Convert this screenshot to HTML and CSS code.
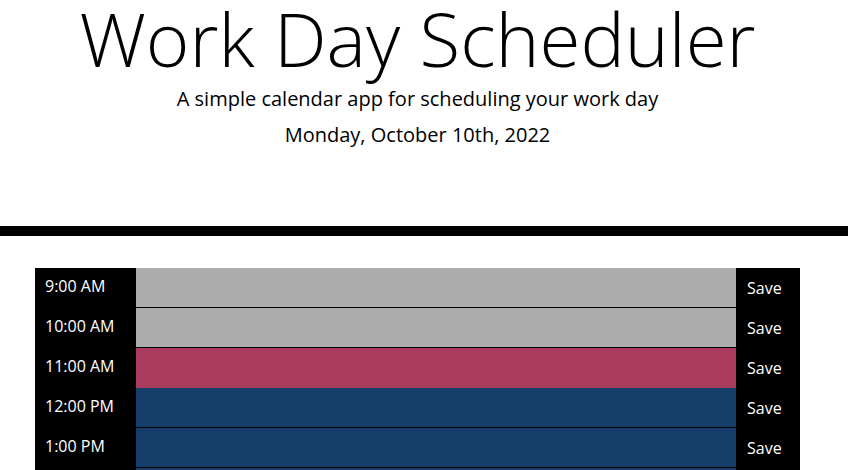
FILE: index.html
```html
<!DOCTYPE html>
<html lang="en">
<head>
<meta charset="utf-8">
<title>Work Day Scheduler</title>
<link rel="stylesheet" href="styles.css">
</head>
<body>
<header class="jumbotron">
  <h1 class="title">Work Day Scheduler</h1>
  <p class="lead">A simple calendar app for scheduling your work day</p>
  <p class="lead date">Monday, October 10th, 2022</p>
</header>
<main class="container">
  <div class="row"><div class="hour">9:00 AM</div><textarea class="description past"></textarea><button class="saveBtn">Save</button></div>
  <div class="row"><div class="hour">10:00 AM</div><textarea class="description past"></textarea><button class="saveBtn">Save</button></div>
  <div class="row"><div class="hour">11:00 AM</div><textarea class="description present"></textarea><button class="saveBtn">Save</button></div>
  <div class="row"><div class="hour">12:00 PM</div><textarea class="description future"></textarea><button class="saveBtn">Save</button></div>
  <div class="row"><div class="hour">1:00 PM</div><textarea class="description future"></textarea><button class="saveBtn">Save</button></div>
  <div class="row"><div class="hour">2:00 PM</div><textarea class="description future"></textarea><button class="saveBtn">Save</button></div>
  <div class="row"><div class="hour">3:00 PM</div><textarea class="description future"></textarea><button class="saveBtn">Save</button></div>
</main>
</body>
</html>
```
FILE: styles.css
```css
* { box-sizing: border-box; }
body {
  margin: 0;
  font-family: "Open Sans", sans-serif;
  color: #000;
  background: #fff;
}
.jumbotron {
  text-align: center;
  border-bottom: 10px solid #000;
  padding: 0 13px 76px 0;
  margin-bottom: 32px;
}
.title {
  margin: 0;
  font-size: 74.5px;
  line-height: 76px;
  font-weight: 300;
}
.lead {
  margin: 8px 0 0;
  font-size: 20px;
  line-height: 30px;
  font-weight: 400;
}
.date { margin-top: 6px; }
.container {
  margin-left: 35px;
  width: 765px;
}
.row {
  display: grid;
  grid-template-columns: 101px 600px 64px;
  height: 40px;
}
.hour {
  background: #000;
  color: #fff;
  font-size: 16px;
  line-height: 24px;
  padding: 6px 0 0 10px;
}
.description {
  display: block;
  width: 100%;
  height: 40px;
  border: none;
  border-bottom: 1px solid #000;
  margin: 0;
  resize: none;
  padding: 0;
  font-family: inherit;
}
.past { background: #acacac; }
.present { background: #a93c5e; border-bottom-color: #a93c5e; }
.future { background: #143d6a; }
.saveBtn {
  background: #000;
  color: #fff;
  border: none;
  margin: 0;
  padding: 0 0 0 11px;
  text-align: left;
  font-family: inherit;
  font-size: 16px;
  line-height: 24px;
  height: 40px;
}
```
